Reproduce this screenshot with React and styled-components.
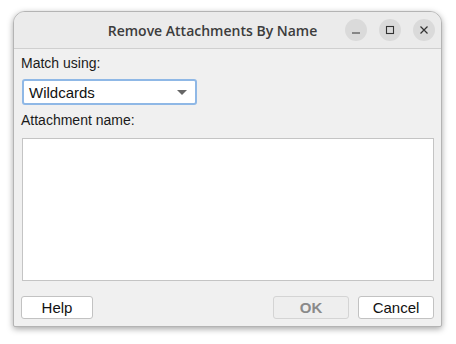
import React from 'react';
import styled, { createGlobalStyle } from 'styled-components';

const GlobalStyle = createGlobalStyle`
  body {
    margin: 0;
    background: #ffffff;
    font-family: "Liberation Sans", Arial, sans-serif;
  }
`;

const Page = styled.div`
  width: 456px;
  height: 344px;
  padding: 11px 0 0 13px;
  box-sizing: border-box;
`;

const Window = styled.div`
  width: 429px;
  height: 316px;
  box-sizing: border-box;
  border: 1px solid #b4b4b4;
  border-radius: 12px 12px 2px 2px;
  background: #f0f0f0;
  box-shadow: 0 2px 6px rgba(0, 0, 0, 0.35);
  display: flex;
  flex-direction: column;
  overflow: hidden;
`;

const TitleBar = styled.div`
  height: 36px;
  flex: none;
  background: #ebebeb;
  border-bottom: 1px solid #cfcfcf;
  display: flex;
  align-items: center;
  position: relative;
`;

const Title = styled.div`
  flex: 1;
  text-align: center;
  margin-right: 30px;
  font-family: "Open Sans", "Noto Sans", sans-serif;
  font-weight: 600;
  font-size: 14px;
  color: #3c3c3c;
`;

const Controls = styled.div`
  position: absolute;
  right: 6px;
  top: 7px;
  display: flex;
  gap: 12px;
`;

const CircleButton = styled.div`
  width: 22px;
  height: 22px;
  border-radius: 50%;
  background: #dadada;
  display: flex;
  align-items: center;
  justify-content: center;
`;

const Body = styled.div`
  flex: 1;
  display: flex;
  flex-direction: column;
  padding: 6px 7px 7px 7px;
`;

const Label = styled.div`
  font-size: 14px;
  line-height: 17px;
  color: #1a1a1a;
  margin-bottom: ${(p) => p.$gap}px;
`;

const Combo = styled.div`
  width: 175px;
  height: 26px;
  box-sizing: border-box;
  margin-left: 1px;
  border: 2px solid #8fb8e6;
  border-radius: 3px;
  background: #ffffff;
  display: flex;
  align-items: center;
  justify-content: space-between;
  padding: 0 8px 0 5px;
  font-size: 15px;
  color: #111;
  margin-bottom: 7px;
`;

const Arrow = styled.div`
  width: 0;
  height: 0;
  border-left: 5px solid transparent;
  border-right: 5px solid transparent;
  border-top: 5px solid #666;
`;

const TextArea = styled.div`
  height: 141px;
  margin-left: 1px;
  margin-top: 9px;
  border: 1px solid #c4c4c4;
  background: #ffffff;
`;

const ButtonRow = styled.div`
  display: flex;
  align-items: center;
  margin-top: auto;
`;

const Button = styled.div`
  width: ${(p) => p.$w}px;
  height: 23px;
  box-sizing: border-box;
  margin-left: ${(p) => p.$ml || 0}px;
  border: 1px solid ${(p) => (p.$disabled ? '#d4d4d4' : '#c2c2c2')};
  border-radius: 3px;
  background: ${(p) => (p.$disabled ? '#eeeeee' : '#ffffff')};
  color: ${(p) => (p.$disabled ? '#8a8a8a' : '#111111')};
  font-size: 15px;
  font-weight: ${(p) => (p.$disabled ? 700 : 400)};
  display: flex;
  align-items: center;
  justify-content: center;
`;

const Spacer = styled.div`
  flex: 1;
`;

export default function App() {
  return (
    <>
      <GlobalStyle />
      <Page>
        <Window>
          <TitleBar>
            <Title>Remove Attachments By Name</Title>
            <Controls>
              <CircleButton>
                <svg width="10" height="10" viewBox="0 0 10 10">
                  <path d="M1 8h8" stroke="#333" strokeWidth="1.2" />
                </svg>
              </CircleButton>
              <CircleButton>
                <svg width="10" height="10" viewBox="0 0 10 10">
                  <rect x="1.5" y="1.5" width="7" height="7" fill="none" stroke="#333" strokeWidth="1.1" />
                </svg>
              </CircleButton>
              <CircleButton>
                <svg width="10" height="10" viewBox="0 0 10 10">
                  <path d="M1.5 1.5l7 7M8.5 1.5l-7 7" stroke="#333" strokeWidth="1.2" />
                </svg>
              </CircleButton>
            </Controls>
          </TitleBar>
          <Body>
            <Label $gap={7}>Match using:</Label>
            <Combo>
              <span>Wildcards</span>
              <Arrow />
            </Combo>
            <Label $gap={0}>Attachment name:</Label>
            <TextArea />
            <ButtonRow>
              <Button $w={72}>Help</Button>
              <Spacer />
              <Button $w={76} $disabled>OK</Button>
              <Button $w={76} $ml={9}>Cancel</Button>
            </ButtonRow>
          </Body>
        </Window>
      </Page>
    </>
  );
}
